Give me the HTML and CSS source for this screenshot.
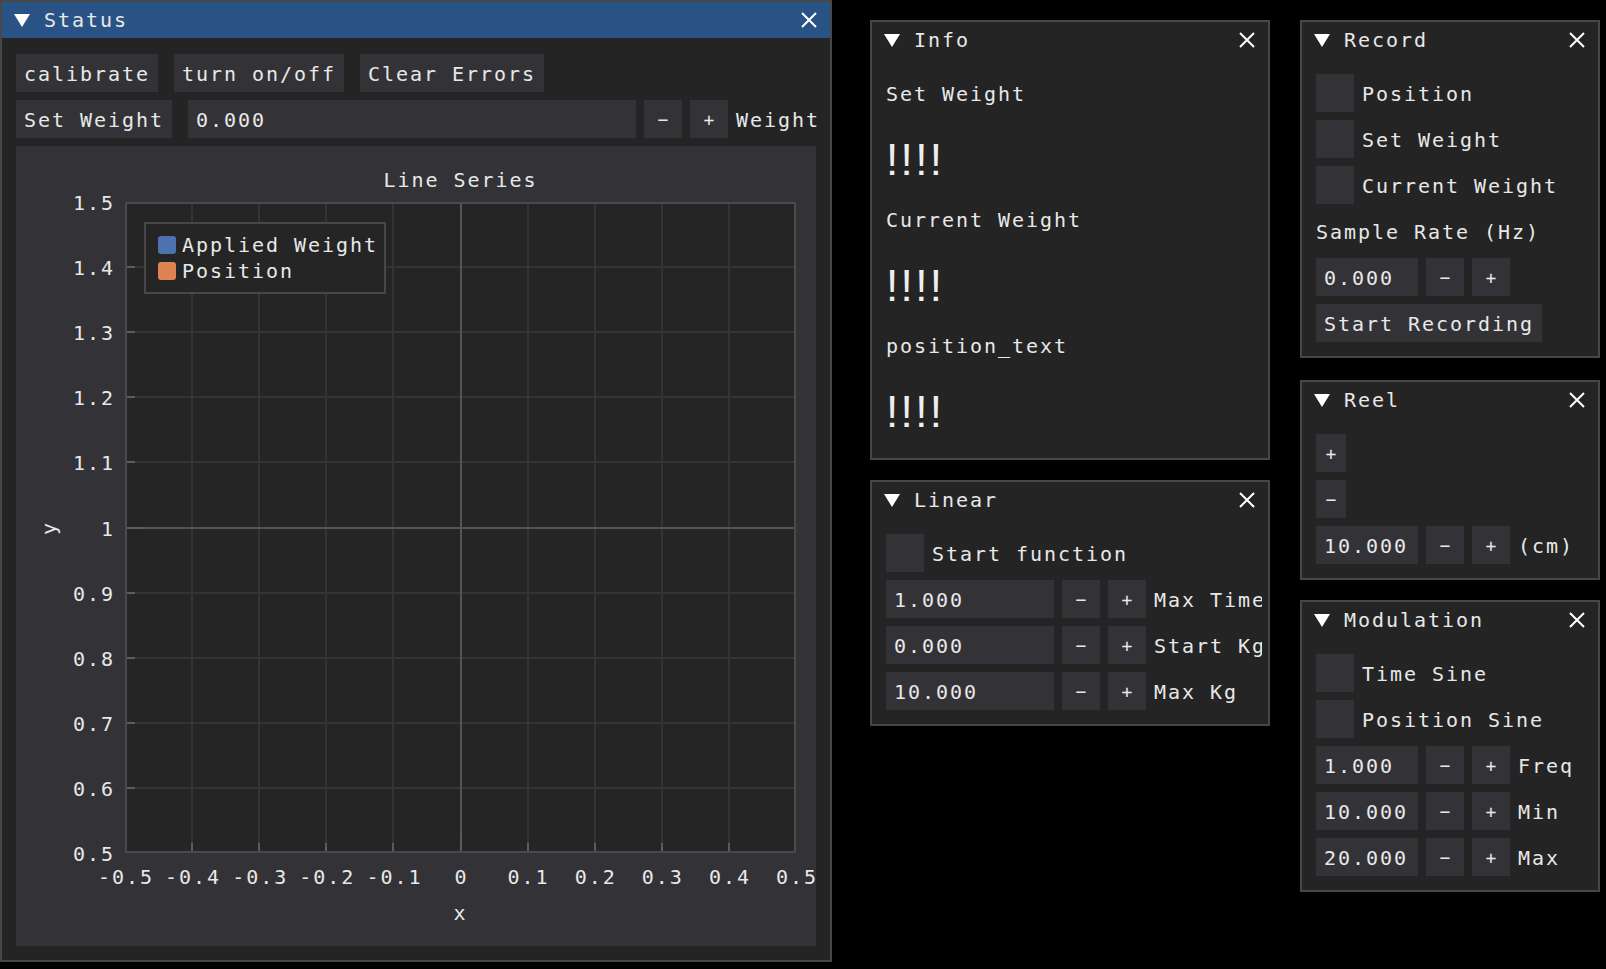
FILE: index.html
```html
<!DOCTYPE html>
<html>
<head>
<meta charset="utf-8">
<link rel="stylesheet" href="styles.css">
</head>
<body>

<div class="win w-status active">
  <div class="title">
    <svg class="tri" viewBox="0 0 16 13"><polygon points="0,0 16,0 8,13" fill="#ffffff"/></svg>
    <span class="ttext">Status</span>
    <svg class="close" viewBox="0 0 16 16"><path d="M1 1 L15 15 M15 1 L1 15" stroke="#ffffff" stroke-width="2"/></svg>
  </div>
  <div class="body">
    <div class="row gap16">
      <div class="btn">calibrate</div>
      <div class="btn">turn on/off</div>
      <div class="btn">Clear Errors</div>
    </div>
    <div class="row">
      <div class="btn mr8">Set Weight</div>
      <div class="inp w448">0.000</div>
      <div class="sq">−</div>
      <div class="sq">+</div>
      <div class="lbl">Weight</div>
    </div>
    <div class="plotframe">
      <div class="ptitle">Line Series</div>
      <div class="ylabel">y</div>
      <div class="yticks">
        <span style="top:-13px">1.5</span>
        <span style="top:52.1px">1.4</span>
        <span style="top:117.2px">1.3</span>
        <span style="top:182.3px">1.2</span>
        <span style="top:247.4px">1.1</span>
        <span style="top:312.5px">1</span>
        <span style="top:377.6px">0.9</span>
        <span style="top:442.7px">0.8</span>
        <span style="top:507.8px">0.7</span>
        <span style="top:572.9px">0.6</span>
        <span style="top:638px">0.5</span>
      </div>
      <div class="plot">
        <svg class="grid" width="671" height="651" viewBox="0 0 671 651">
          <g stroke="#343434" stroke-width="2">
            <path d="M67 0V651 M134 0V651 M201 0V651 M268 0V651 M403 0V651 M470 0V651 M537 0V651 M604 0V651"/>
            <path d="M0 65H671 M0 130H671 M0 195H671 M0 260H671 M0 391H671 M0 456H671 M0 521H671 M0 586H671"/>
          </g>
          <g stroke="#555555" stroke-width="2">
            <path d="M336 0V651 M0 326H671"/>
          </g>
          <g stroke="#5c5c5c" stroke-width="2">
            <path d="M0 65H10 M0 130H10 M0 195H10 M0 260H10 M0 326H20 M0 391H10 M0 456H10 M0 521H10 M0 586H10"/>
            <path d="M67 641V651 M134 641V651 M201 641V651 M268 641V651 M336 631V651 M403 641V651 M470 641V651 M537 641V651 M604 641V651"/>
          </g>
          <rect x="1" y="1" width="669" height="649" fill="none" stroke="#4a4a4a" stroke-width="2"/>
        </svg>
        <div class="legend">
          <div class="litem"><span class="sw sw-blue"></span>Applied Weight</div>
          <div class="litem"><span class="sw sw-orange"></span>Position</div>
        </div>
      </div>
      <div class="xticks">
        <span style="left:0px">-0.5</span>
        <span style="left:67.1px">-0.4</span>
        <span style="left:134.2px">-0.3</span>
        <span style="left:201.3px">-0.2</span>
        <span style="left:268.4px">-0.1</span>
        <span style="left:335.5px">0</span>
        <span style="left:402.6px">0.1</span>
        <span style="left:469.7px">0.2</span>
        <span style="left:536.8px">0.3</span>
        <span style="left:603.9px">0.4</span>
        <span style="left:671px">0.5</span>
      </div>
      <div class="xlabel">x</div>
    </div>
  </div>
</div>

<div class="win w-info">
  <div class="title">
    <svg class="tri" viewBox="0 0 16 13"><polygon points="0,0 16,0 8,13" fill="#ffffff"/></svg>
    <span class="ttext">Info</span>
    <svg class="close" viewBox="0 0 16 16"><path d="M1 1 L15 15 M15 1 L1 15" stroke="#ffffff" stroke-width="2"/></svg>
  </div>
  <div class="body">
    <div class="lbl">Set Weight</div>
    <div class="big">!!!!</div>
    <div class="lbl">Current Weight</div>
    <div class="big">!!!!</div>
    <div class="lbl">position_text</div>
    <div class="big">!!!!</div>
  </div>
</div>

<div class="win w-linear">
  <div class="title">
    <svg class="tri" viewBox="0 0 16 13"><polygon points="0,0 16,0 8,13" fill="#ffffff"/></svg>
    <span class="ttext">Linear</span>
    <svg class="close" viewBox="0 0 16 16"><path d="M1 1 L15 15 M15 1 L1 15" stroke="#ffffff" stroke-width="2"/></svg>
  </div>
  <div class="body">
    <div class="row"><div class="chk"></div><div class="lbl">Start function</div></div>
    <div class="row"><div class="inp w168">1.000</div><div class="sq">−</div><div class="sq">+</div><div class="lbl">Max Time</div></div>
    <div class="row"><div class="inp w168">0.000</div><div class="sq">−</div><div class="sq">+</div><div class="lbl">Start Kg</div></div>
    <div class="row"><div class="inp w168">10.000</div><div class="sq">−</div><div class="sq">+</div><div class="lbl">Max Kg</div></div>
  </div>
</div>

<div class="win w-record">
  <div class="title">
    <svg class="tri" viewBox="0 0 16 13"><polygon points="0,0 16,0 8,13" fill="#ffffff"/></svg>
    <span class="ttext">Record</span>
    <svg class="close" viewBox="0 0 16 16"><path d="M1 1 L15 15 M15 1 L1 15" stroke="#ffffff" stroke-width="2"/></svg>
  </div>
  <div class="body">
    <div class="row"><div class="chk"></div><div class="lbl">Position</div></div>
    <div class="row"><div class="chk"></div><div class="lbl">Set Weight</div></div>
    <div class="row"><div class="chk"></div><div class="lbl">Current Weight</div></div>
    <div class="lbl">Sample Rate (Hz)</div>
    <div class="row"><div class="inp w102">0.000</div><div class="sq">−</div><div class="sq">+</div></div>
    <div class="row"><div class="btn">Start Recording</div></div>
  </div>
</div>

<div class="win w-reel">
  <div class="title">
    <svg class="tri" viewBox="0 0 16 13"><polygon points="0,0 16,0 8,13" fill="#ffffff"/></svg>
    <span class="ttext">Reel</span>
    <svg class="close" viewBox="0 0 16 16"><path d="M1 1 L15 15 M15 1 L1 15" stroke="#ffffff" stroke-width="2"/></svg>
  </div>
  <div class="body">
    <div class="row"><div class="btn sm">+</div></div>
    <div class="row"><div class="btn sm">−</div></div>
    <div class="row"><div class="inp w102">10.000</div><div class="sq">−</div><div class="sq">+</div><div class="lbl">(cm)</div></div>
  </div>
</div>

<div class="win w-mod">
  <div class="title">
    <svg class="tri" viewBox="0 0 16 13"><polygon points="0,0 16,0 8,13" fill="#ffffff"/></svg>
    <span class="ttext">Modulation</span>
    <svg class="close" viewBox="0 0 16 16"><path d="M1 1 L15 15 M15 1 L1 15" stroke="#ffffff" stroke-width="2"/></svg>
  </div>
  <div class="body">
    <div class="row"><div class="chk"></div><div class="lbl">Time Sine</div></div>
    <div class="row"><div class="chk"></div><div class="lbl">Position Sine</div></div>
    <div class="row"><div class="inp w102">1.000</div><div class="sq">−</div><div class="sq">+</div><div class="lbl">Freq</div></div>
    <div class="row"><div class="inp w102">10.000</div><div class="sq">−</div><div class="sq">+</div><div class="lbl">Min</div></div>
    <div class="row"><div class="inp w102">20.000</div><div class="sq">−</div><div class="sq">+</div><div class="lbl">Max</div></div>
  </div>
</div>

</body>
</html>
```

FILE: styles.css
```css
* { box-sizing: border-box; margin: 0; padding: 0; }

html, body { background: #000000; }

body {
  position: relative;
  width: 1606px;
  height: 969px;
  overflow: hidden;
  font-family: "DejaVu Sans Mono", "Liberation Mono", monospace;
  font-size: 20px;
  letter-spacing: 1.96px;
  color: #e8e8e8;
  white-space: nowrap;
}

/* windows placed on the desktop canvas */
.win {
  position: absolute;
  display: flex;
  flex-direction: column;
  background: #242424;
  border: 2px solid #474747;
}
.w-status { left: 0; top: 0; width: 832px; height: 962px; }
.w-info { left: 870px; top: 20px; width: 400px; height: 440px; }
.w-linear { left: 870px; top: 480px; width: 400px; height: 246px; }
.w-record { left: 1300px; top: 20px; width: 300px; height: 338px; }
.w-reel { left: 1300px; top: 380px; width: 300px; height: 200px; }
.w-mod { left: 1300px; top: 600px; width: 300px; height: 292px; }

.title {
  flex: none;
  height: 36px;
  display: flex;
  align-items: center;
  padding: 0 13px 0 12px;
  background: #242424;
}
.active .title { background: #285384; }
.tri { flex: none; width: 16px; height: 13px; margin-right: 14px; }
.ttext { line-height: 26px; }
.close { flex: none; width: 16px; height: 16px; margin-left: auto; }

.body {
  flex: 1;
  display: flex;
  flex-direction: column;
  gap: 8px;
  padding: 16px 0 14px 14px;
  margin-right: 6px;
  overflow: hidden;
}

.row { flex: none; display: flex; align-items: center; gap: 8px; }
.row > * { flex: none; }
.gap16 { gap: 16px; }
.mr8 { margin-right: 8px; }

.btn {
  height: 38px;
  line-height: 40px;
  padding: 0 8px;
  background: #333337;
}
.btn.sm { width: 30px; padding: 0; text-align: center; letter-spacing: 0; font-size: 18px; }
.inp {
  height: 38px;
  line-height: 40px;
  padding: 0 8px;
  background: #333337;
}
.w448 { width: 448px; }
.w168 { width: 168px; }
.w102 { width: 102px; }

.sq {
  width: 38px;
  height: 38px;
  line-height: 40px;
  text-align: center;
  letter-spacing: 0;
  font-size: 18px;
  background: #333337;
}
.chk { width: 38px; height: 38px; background: #333337; }
.lbl { flex: none; height: 38px; line-height: 40px; }

.big {
  flex: none;
  height: 72px;
  padding-top: 13px;
  line-height: 54px;
  font-family: "Liberation Sans", Arial, sans-serif;
  font-size: 44px;
  letter-spacing: 2.4px;
  color: #eeeeee;
}

/* plot */
.plotframe {
  flex: none;
  width: 800px;
  height: 800px;
  padding: 20px;
  background: #333337;
  display: grid;
  grid-template-columns: 26px 43px 671px;
  grid-template-rows: 26px 651px 26px 26px;
  column-gap: 10px;
  row-gap: 10px;
}
.ptitle { grid-column: 3; grid-row: 1; text-align: center; line-height: 28px; }
.ylabel {
  grid-column: 1;
  grid-row: 2;
  writing-mode: vertical-rl;
  transform: rotate(180deg);
  text-align: center;
  line-height: 26px;
}
.yticks { grid-column: 2; grid-row: 2; position: relative; }
.yticks span { position: absolute; right: 0; line-height: 28px; }

.plot { grid-column: 3; grid-row: 2; position: relative; background: #252525; }
.grid { display: block; }

.legend {
  position: absolute;
  left: 19px;
  top: 20px;
  width: 242px;
  height: 72px;
  padding: 8px 0 0 12px;
  background: #252525;
  border: 2px solid #474747;
}
.litem { display: flex; align-items: center; height: 26px; line-height: 28px; }
.sw { width: 18px; height: 18px; border-radius: 3px; margin-right: 6px; }
.sw-blue { background: #4c72b0; }
.sw-orange { background: #dd8452; }

.xticks { grid-column: 3; grid-row: 3; position: relative; }
.xticks span {
  position: absolute;
  top: 0;
  line-height: 28px;
  margin-left: 1px;
  transform: translateX(-50%);
}
.xlabel { grid-column: 3; grid-row: 4; text-align: center; line-height: 28px; }
```
